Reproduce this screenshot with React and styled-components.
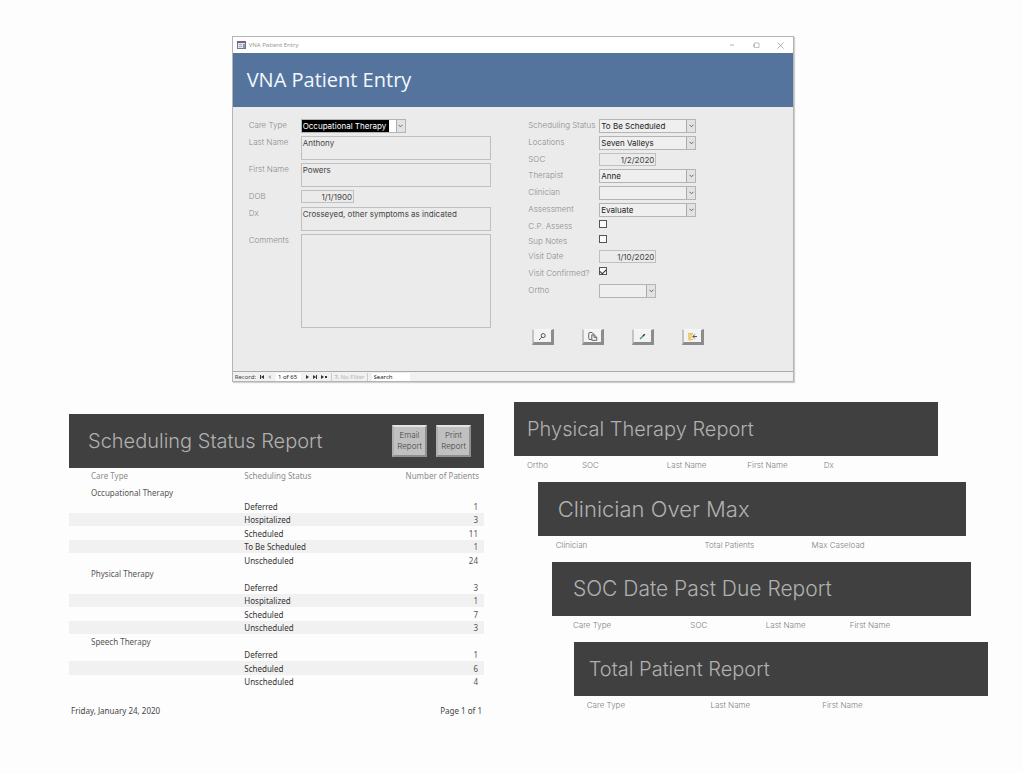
import React from 'react';
import styled, { createGlobalStyle } from 'styled-components';

const gothic = `Inter, "DejaVu Sans", sans-serif`;
const segoe = `"Noto Sans", "Open Sans", sans-serif`;

const GlobalStyle = createGlobalStyle`
  * {
    box-sizing: border-box;
  }

  body {
    margin: 0;
    background: #fdfdfd;
    font-family: ${gothic};
    font-size: 8px;
    color: #444;
  }

  input, select, textarea, button {
    margin: 0;
    font-family: inherit;
    font-size: inherit;
    color: inherit;
  }
`

const Page = styled.main`
  padding: 36px 35px 36px 69px;
`

/* ---------- Patient entry window ---------- */

const Window = styled.section`
  width: 61.2%;
  margin-left: 17.7%;
  background: #ebebeb;
  border: 1px solid #b4b4b4;
  box-shadow: 1px 1px 1px #d0d0d0;
`

const TitleBar = styled.div`
  display: flex;
  align-items: center;
  gap: 3px;
  height: 16px;
  padding: 0 8px 0 4px;
  background: #fff;
  color: #999;
  font-family: ${segoe};
  font-size: 6px;
  line-height: 10px;
`

const WindowControls = styled.div`
  display: flex;
  gap: 14px;
  margin-left: auto;
`

const WindowButton = styled.button`
  display: flex;
  align-items: center;
  justify-content: center;
  width: 10px;
  height: 10px;
  padding: 0;
  border: 0;
  background: none;
  color: #999;
`

const WindowHeader = styled.header`
  display: flex;
  align-items: center;
  height: 54px;
  padding: 0 14px;
  background: #54749e;
`

const WindowTitle = styled.h1`
  margin: 0;
  color: #f2f8fd;
  font-family: "Open Sans", "Noto Sans", sans-serif;
  font-size: 20px;
  font-weight: 400;
  line-height: 28px;
`

const Form = styled.form`
  display: grid;
  grid-template-columns: minmax(0, 243fr) minmax(0, 168fr);
  column-gap: 37px;
  min-height: 263px;
  padding: 12px 97px 26px 16px;
`

const Column = styled.div`
  display: flex;
  flex-direction: column;
  gap: 3px;
`

const Field = styled.div`
  display: grid;
  grid-template-columns: ${props => props.$label || 71}px minmax(0, 1fr);
  align-items: start;
  min-height: ${props => props.$height || 14}px;
`

const Label = styled.label`
  color: #8c8c8c;
  font-weight: 300;
  line-height: 12px;
  white-space: nowrap;
`

const TextBox = styled.input`
  width: ${props => props.$width || '100%'};
  height: 13px;
  padding: 0 1px;
  border: 1px solid #c0c0c0;
  background: #ebebeb;
  text-align: right;
`

const TextArea = styled.textarea`
  display: block;
  width: 100%;
  height: ${props => props.$height}px;
  padding: 1px;
  border: 1px solid #c0c0c0;
  background: #ebebeb;
  line-height: 10px;
  resize: none;
`

const Combo = styled.div`
  display: flex;
  justify-content: space-between;
  width: ${props => props.$width || '100%'};
  height: 14px;
  border: 1px solid #b4b4b4;
  background: ${props => (props.$active ? '#fff' : '#efefef')};
`

const Select = styled.select`
  appearance: none;
  flex: ${props => (props.$active ? '0 0 87px' : '1')};
  min-width: 0;
  height: 12px;
  padding: 0 1px;
  border: 0;
  border-radius: 0;
  background: ${props => (props.$active ? '#000' : 'none')};
  color: ${props => (props.$active ? '#fff' : '#222')};
  line-height: 12px;
  outline: none;
`

const Arrow = styled.span`
  display: flex;
  align-items: center;
  justify-content: center;
  flex: 0 0 9px;
  border-left: 1px solid #aaa;
  background: #e2e2e2;
  color: #666;
`

const CheckBox = styled.input`
  appearance: none;
  display: flex;
  justify-content: center;
  width: 8px;
  height: 8px;
  border: 1px solid #555;
  background: #fafafa;

  &:checked::before {
    content: "";
    width: 5px;
    height: 3px;
    margin-top: 1px;
    border: solid #333;
    border-width: 0 0 1px 1px;
    transform: rotate(-45deg);
  }
`

const Actions = styled.div`
  display: flex;
  gap: 28px;
  margin-top: 28px;
  padding-left: 4px;
`

const ActionButton = styled.button`
  display: flex;
  align-items: center;
  justify-content: center;
  flex: 0 0 22px;
  height: 16px;
  padding: 0;
  border: solid;
  border-width: 1px 3px 3px 2px;
  border-color: #f6f6f6 #8c8c8c #8c8c8c #c4c4c4;
  background: #f3f3f3;
  color: #555;
`

const RecordBar = styled.div`
  display: flex;
  align-items: center;
  gap: 4px;
  height: 10px;
  padding-left: 2px;
  border-top: 1px solid #aaa;
  background: #f1f1f1;
  color: #444;
  font-family: ${segoe};
  font-size: 6px;
  line-height: 8px;
`

const RecordInput = styled.input`
  width: ${props => props.$width}px;
  height: 8px;
  padding: 0 2px;
  border: 0;
  background: #fff;
  color: #222;

  &::placeholder {
    color: #222;
    opacity: 1;
  }
`

const NavButton = styled.button`
  display: flex;
  padding: 0;
  border: 0;
  background: none;
  color: ${props => (props.$muted ? '#b5b5b5' : '#333')};
`

const Filter = styled.span`
  padding: 0 2px;
  border: solid #ccc;
  border-width: 0 1px;
  color: #b5b5b5;
`

/* ---------- Reports ---------- */

const Reports = styled.div`
  display: grid;
  grid-template-columns: 415fr 474fr;
  column-gap: 30px;
  margin-top: 20px;
`

const StatusReport = styled.section`
  padding-top: 12px;
  font-family: ${segoe};
`

const ReportStack = styled.div`
  display: flex;
  flex-direction: column;
`

const Report = styled.section`
  width: ${props => props.$width}%;
  height: 80px;
  margin-left: ${props => props.$indent}%;
`

const ReportHeader = styled.header`
  display: flex;
  align-items: center;
  gap: 9px;
  height: 54px;
  padding: 0 13px 0 ${props => props.$pad}px;
  background: #404040;
`

const ReportTitle = styled.h2`
  flex: 1;
  margin: 0;
  color: #b0b0b0;
  font-family: ${gothic};
  font-size: ${props => props.$size || 20}px;
  font-weight: 300;
  line-height: 28px;
  white-space: nowrap;
`

const ReportButton = styled.button`
  width: 35px;
  height: 32px;
  padding: 0;
  border: 2px solid;
  border-color: #e4e4e4 #909090 #909090 #b0b0b0;
  background: #c0c0c0;
  color: #444;
  font-family: ${gothic};
  font-weight: 300;
  line-height: 11px;
`

const HeadTable = styled.table`
  width: 100%;
  border-collapse: collapse;
  table-layout: fixed;
`

const HeadCell = styled.th`
  width: ${props => props.$width || 'auto'};
  height: 18px;
  padding: 0 0 0 ${props => props.$pad || 0}px;
  color: #808080;
  font-weight: 300;
  line-height: 12px;
  text-align: left;
  white-space: nowrap;
`

const StatusTable = styled.table`
  width: 100%;
  border-collapse: collapse;
  table-layout: fixed;
`

const StatusHead = styled.th`
  width: ${props => props.$width || 'auto'};
  height: 18px;
  padding: ${props => props.$pad || '2px 0 0 1px'};
  color: #8c8c8c;
  font-weight: 400;
  line-height: 12px;
  text-align: ${props => props.$align || 'left'};
  vertical-align: top;
`

const StatusRow = styled.tr`
  height: 13px;
  background: ${props => (props.$shaded ? '#f1f1f1' : 'none')};

  &:nth-child(even) {
    height: 14px;
  }
`

const StatusCell = styled.td`
  padding: 0 0 0 1px;
  color: #333;
  line-height: 13px;
`

const GroupCell = styled(StatusCell)`
  padding-left: 22px;
  color: #555;
`

const CountCell = styled(StatusCell)`
  padding-right: 6px;
  color: #555;
  text-align: right;
`

const ReportFooter = styled.footer`
  display: flex;
  justify-content: space-between;
  margin-top: 17px;
  padding: 0 2px;
  color: #444;
  line-height: 12px;
`

const groups = [
  {
    name: 'Occupational Therapy',
    rows: [['Deferred', 1], ['Hospitalized', 3], ['Scheduled', 11], ['To Be Scheduled', 1], ['Unscheduled', 24]],
  },
  {
    name: 'Physical Therapy',
    rows: [['Deferred', 3], ['Hospitalized', 1], ['Scheduled', 7], ['Unscheduled', 3]],
  },
  {
    name: 'Speech Therapy',
    rows: [['Deferred', 1], ['Scheduled', 6], ['Unscheduled', 4]],
  },
];

const reports = [
  {
    title: 'Physical Therapy Report',
    size: 20,
    indent: 0,
    width: 89.5,
    pad: 13,
    headPad: 13,
    columns: [['Ortho', '16%'], ['SOC', '20%'], ['Last Name', '19%'], ['First Name', '18%'], ['Dx']],
  },
  {
    title: 'Clinician Over Max',
    size: 22,
    indent: 5,
    width: 90.3,
    pad: 20,
    headPad: 18,
    columns: [['Clinician', '39%'], ['Total Patients', '25%'], ['Max Caseload']],
  },
  {
    title: 'SOC Date Past Due Report',
    size: 21,
    indent: 8,
    width: 88.5,
    pad: 21,
    headPad: 21,
    columns: [['Care Type', '33%'], ['SOC', '18%'], ['Last Name', '20%'], ['First Name']],
  },
  {
    title: 'Total Patient Report',
    size: 20,
    indent: 12.6,
    width: 87.4,
    pad: 15,
    headPad: 13,
    columns: [['Care Type', '33%'], ['Last Name', '27%'], ['First Name']],
  },
];

const ComboBox = ({ id, value, width, active }) => (
  <Combo $width={width} $active={active}>
    <Select id={id} defaultValue={value} $active={active}>
      <option value={value}>{value}</option>
    </Select>
    <Arrow>
      <svg width="5" height="4" viewBox="0 0 5 4" fill="none" stroke="currentColor">
        <path d="M0.5 0.8 L2.5 2.8 L4.5 0.8" />
      </svg>
    </Arrow>
  </Combo>
)

const PatientEntry = () => (
  <Window>
    <TitleBar>
      <svg width="9" height="8" viewBox="0 0 9 8">
        <rect x="0.5" y="0.5" width="8" height="7" fill="#dfe5ee" stroke="#6d7891" />
        <path d="M0 1.2h9" stroke="#8b4a68" strokeWidth="1.4" />
        <path d="M2 3.5h3M2 5.5h3" stroke="#a5aebf" />
        <path d="M6 3v4h2V3z" fill="#8a98b4" />
      </svg>
      <span>VNA Patient Entry</span>
      <WindowControls>
        <WindowButton type="button" aria-label="Minimize">
          <svg width="6" height="6" viewBox="0 0 6 6" stroke="currentColor" strokeWidth="0.8"><path d="M1 3h4" /></svg>
        </WindowButton>
        <WindowButton type="button" aria-label="Maximize">
          <svg width="7" height="7" viewBox="0 0 7 7" fill="none" stroke="currentColor" strokeWidth="0.6">
            <path d="M1.5 1h4.500v4.500h-4.500zM0.500 2v3" />
          </svg>
        </WindowButton>
        <WindowButton type="button" aria-label="Close">
          <svg width="7" height="7" viewBox="0 0 7 7" stroke="currentColor" strokeWidth="0.8"><path d="M0.5 0.5l6 6M6.5 0.5l-6 6" /></svg>
        </WindowButton>
      </WindowControls>
    </TitleBar>
    <WindowHeader>
      <WindowTitle>VNA Patient Entry</WindowTitle>
    </WindowHeader>
    <Form onSubmit={e => e.preventDefault()}>
      <Column>
        <Field $label={52}>
          <Label htmlFor="careType">Care Type</Label>
          <ComboBox id="careType" value="Occupational Therapy" width="55%" active />
        </Field>
        <Field $label={52}>
          <Label htmlFor="lastName">Last Name</Label>
          <TextArea id="lastName" $height={24} defaultValue="Anthony" />
        </Field>
        <Field $label={52}>
          <Label htmlFor="firstName">First Name</Label>
          <TextArea id="firstName" $height={24} defaultValue="Powers" />
        </Field>
        <Field $label={52}>
          <Label htmlFor="dob">DOB</Label>
          <TextBox id="dob" $width="28%" defaultValue="1/1/1900" />
        </Field>
        <Field $label={52}>
          <Label htmlFor="dx">Dx</Label>
          <TextArea id="dx" $height={24} defaultValue="Crosseyed, other symptoms as indicated" />
        </Field>
        <Field $label={52}>
          <Label htmlFor="comments">Comments</Label>
          <TextArea id="comments" $height={94} />
        </Field>
      </Column>
      <Column>
        <Field>
          <Label htmlFor="status">Scheduling Status</Label>
          <ComboBox id="status" value="To Be Scheduled" />
        </Field>
        <Field>
          <Label htmlFor="locations">Locations</Label>
          <ComboBox id="locations" value="Seven Valleys" />
        </Field>
        <Field $height={13}>
          <Label htmlFor="soc">SOC</Label>
          <TextBox id="soc" $width="59%" defaultValue="1/2/2020" />
        </Field>
        <Field>
          <Label htmlFor="therapist">Therapist</Label>
          <ComboBox id="therapist" value="Anne" />
        </Field>
        <Field>
          <Label htmlFor="clinician">Clinician</Label>
          <ComboBox id="clinician" value="" />
        </Field>
        <Field>
          <Label htmlFor="assessment">Assessment</Label>
          <ComboBox id="assessment" value="Evaluate" />
        </Field>
        <Field $height={12}>
          <Label htmlFor="cpAssess">C.P. Assess</Label>
          <CheckBox id="cpAssess" type="checkbox" />
        </Field>
        <Field $height={12}>
          <Label htmlFor="supNotes">Sup Notes</Label>
          <CheckBox id="supNotes" type="checkbox" />
        </Field>
        <Field>
          <Label htmlFor="visitDate">Visit Date</Label>
          <TextBox id="visitDate" $width="59%" defaultValue="1/10/2020" />
        </Field>
        <Field>
          <Label htmlFor="confirmed">Visit Confirmed?</Label>
          <CheckBox id="confirmed" type="checkbox" defaultChecked />
        </Field>
        <Field>
          <Label htmlFor="ortho">Ortho</Label>
          <ComboBox id="ortho" value="" width="59%" />
        </Field>
        <Actions>
          <ActionButton type="button" aria-label="Find record">
            <svg width="9" height="9" viewBox="0 0 9 9" fill="none" stroke="currentColor">
              <circle cx="5.2" cy="3.6" r="2" />
              <path d="M3.8 5.2L1 8" />
            </svg>
          </ActionButton>
          <ActionButton type="button" aria-label="Duplicate record">
            <svg width="11" height="10" viewBox="0 0 11 10" fill="none" stroke="currentColor" strokeWidth="0.9">
              <path d="M4.5 8.5H2.2c-.8-1.8-.8-5.2 0-7h3l1.6 1.7" />
              <path d="M4.8 9.3V3.8h2.4l2.6 2.5v3z" />
              <path d="M7 4v2.4h2.6" />
            </svg>
          </ActionButton>
          <ActionButton type="button" aria-label="Edit record">
            <svg width="9" height="9" viewBox="0 0 9 9" fill="none">
              <path d="M2 7l3.5-3.5" stroke="#4f8f78" strokeWidth="1.3" />
              <path d="M5 4l1.8-1.8" stroke="#333" strokeWidth="1.4" />
            </svg>
          </ActionButton>
          <ActionButton type="button" aria-label="Close form">
            <svg width="11" height="9" viewBox="0 0 11 9">
              <path d="M1 1h5v1.5H4.5V7H6v1H1z" fill="#e6bf55" />
              <path d="M1 1l3 1.500V9L1 8z" fill="#efcf77" />
              <path d="M10 4.5H6M7.8 2.5l-2 2 2 2" fill="none" stroke="#555" />
            </svg>
          </ActionButton>
        </Actions>
      </Column>
    </Form>
    <RecordBar>
      <span>Record:</span>
      <NavButton type="button" aria-label="First record">
        <svg width="4" height="4" viewBox="0 0 4 4" fill="currentColor"><path d="M0 0h1v4H0zM4 0v4L1 2z" /></svg>
      </NavButton>
      <NavButton type="button" aria-label="Previous record" $muted>
        <svg width="4" height="4" viewBox="0 0 4 4" fill="currentColor"><path d="M3 0v4L0 2z" /></svg>
      </NavButton>
      <RecordInput $width={25} aria-label="Current record" defaultValue="1 of 65" />
      <NavButton type="button" aria-label="Next record">
        <svg width="4" height="4" viewBox="0 0 4 4" fill="currentColor"><path d="M1 0v4l3-2z" /></svg>
      </NavButton>
      <NavButton type="button" aria-label="Last record">
        <svg width="4" height="4" viewBox="0 0 4 4" fill="currentColor"><path d="M0 0v4l3-2zM3 0h1v4H3z" /></svg>
      </NavButton>
      <NavButton type="button" aria-label="New record">
        <svg width="6" height="4" viewBox="0 0 6 4" fill="currentColor"><path d="M0 0v4l3-2zM4 1h2v2H4z" /></svg>
      </NavButton>
      <Filter>
        <svg width="5" height="4" viewBox="0 0 5 4" fill="none" stroke="currentColor" strokeWidth="0.7"><path d="M0.5 0.5h3l-1.5 1.5v2M3 2l2 2" /></svg>
        {' '}No Filter
      </Filter>
      <RecordInput $width={38} aria-label="Search records" placeholder="Search" />
    </RecordBar>
  </Window>
)

const SchedulingStatus = () => (
  <StatusReport>
    <ReportHeader $pad={19}>
      <ReportTitle>Scheduling Status Report</ReportTitle>
      <ReportButton type="button">Email Report</ReportButton>
      <ReportButton type="button">Print Report</ReportButton>
    </ReportHeader>
    <StatusTable>
      <thead>
        <tr>
          <StatusHead $width="42%" $pad="2px 0 0 22px">Care Type</StatusHead>
          <StatusHead>Scheduling Status</StatusHead>
          <StatusHead $align="right" $pad="2px 5px 0 0">Number of Patients</StatusHead>
        </tr>
      </thead>
      <tbody>
        {groups.map(group => (
          <React.Fragment key={group.name}>
            <StatusRow>
              <GroupCell colSpan={3}>{group.name}</GroupCell>
            </StatusRow>
            {group.rows.map(([status, count], i) => (
              <StatusRow key={status} $shaded={i % 2 === 1}>
                <StatusCell />
                <StatusCell>{status}</StatusCell>
                <CountCell>{count}</CountCell>
              </StatusRow>
            ))}
          </React.Fragment>
        ))}
      </tbody>
    </StatusTable>
    <ReportFooter>
      <span>Friday, January 24, 2020</span>
      <span>Page 1 of 1</span>
    </ReportFooter>
  </StatusReport>
)

const App = () => {
  return (
    <Page>
      <GlobalStyle />
      <PatientEntry />
      <Reports>
        <SchedulingStatus />
        <ReportStack>
          {reports.map(report => (
            <Report key={report.title} $indent={report.indent} $width={report.width}>
              <ReportHeader $pad={report.pad}>
                <ReportTitle $size={report.size}>{report.title}</ReportTitle>
              </ReportHeader>
              <HeadTable>
                <thead>
                  <tr>
                    {report.columns.map(([name, width], i) => (
                      <HeadCell key={name} $width={width} $pad={i === 0 ? report.headPad : 0}>{name}</HeadCell>
                    ))}
                  </tr>
                </thead>
              </HeadTable>
            </Report>
          ))}
        </ReportStack>
      </Reports>
    </Page>
  )
}

export default App;
